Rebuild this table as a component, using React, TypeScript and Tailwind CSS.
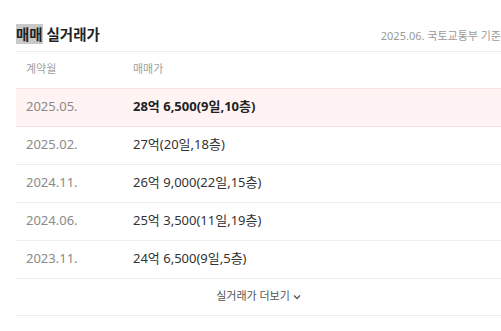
const rows = [
  { month: "2025.05.", price: "28억 6,500(9일,10층)", highlight: true },
  { month: "2025.02.", price: "27억(20일,18층)" },
  { month: "2024.11.", price: "26억 9,000(22일,15층)" },
  { month: "2024.06.", price: "25억 3,500(11일,19층)" },
  { month: "2023.11.", price: "24억 6,500(9일,5층)" },
];

export default function App() {
  return (
    <div
      className="w-[501px] h-[331px] bg-white pl-4 overflow-hidden"
      style={{ fontFamily: '"Noto Sans", "Noto Sans CJK KR", sans-serif' }}
    >
      {/* Title */}
      <div className="flex items-baseline justify-between pt-[24px] pb-[6px] border-b border-[#ececec]">
        <h2 className="text-[14.5px] leading-[20px] font-semibold text-[#222]">
          <span className="bg-[#c9c9c9]">매매</span> 실거래가
        </h2>
        <span className="text-[11px] text-[#9a9a9a] whitespace-nowrap">2025.06. 국토교통부 기준</span>
      </div>

      {/* Header */}
      <div className="flex items-center h-[36px] pl-[10px] text-[11px] text-[#a0a0a0]">
        <span className="w-[107px]">계약월</span>
        <span>매매가</span>
      </div>

      {/* Rows */}
      {rows.map((r) =>
        r.highlight ? (
          <div
            key={r.month}
            className="flex items-center h-[39px] pl-[10px] bg-[#fff3f3] border-y border-[#fbe2e2] text-[13px]"
          >
            <span className="w-[107px] text-[#8a8a8a]">{r.month}</span>
            <span className="font-bold text-[#222]">{r.price}</span>
          </div>
        ) : (
          <div
            key={r.month}
            className="flex items-center h-[38px] pl-[10px] border-b border-[#ededed] text-[13px]"
          >
            <span className="w-[107px] text-[#8a8a8a]">{r.month}</span>
            <span className="text-[#333]">{r.price}</span>
          </div>
        )
      )}

      {/* More */}
      <div className="flex items-center justify-center h-[37px] border-b border-[#ededed] text-[11px] text-[#555]">
        <span>실거래가 더보기</span>
        <svg width="8" height="6" viewBox="0 0 8 6" className="ml-[3px]" fill="none">
          <path d="M1 1.5l3 3 3-3" stroke="#555" strokeWidth="1.3" />
        </svg>
      </div>
    </div>
  );
}
